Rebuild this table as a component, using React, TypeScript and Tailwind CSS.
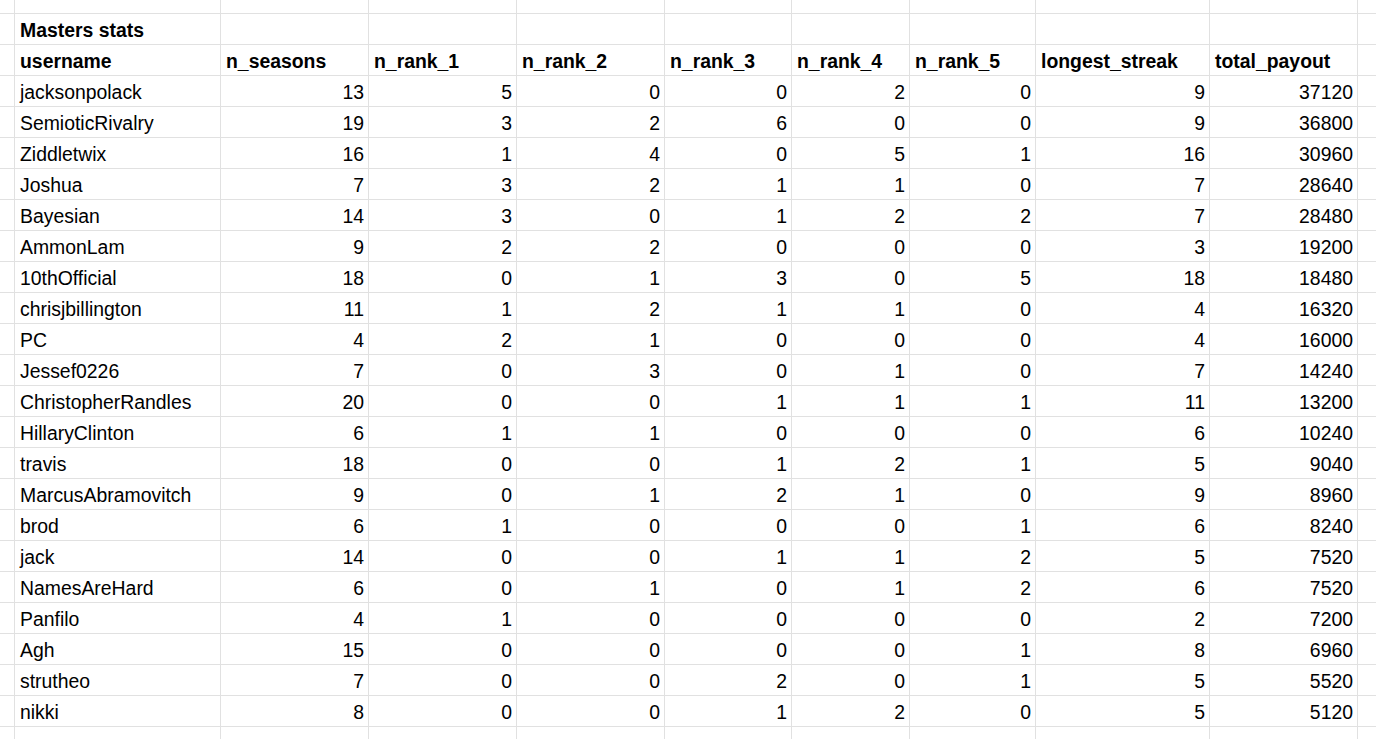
const header = [
  'username',
  'n_seasons',
  'n_rank_1',
  'n_rank_2',
  'n_rank_3',
  'n_rank_4',
  'n_rank_5',
  'longest_streak',
  'total_payout',
];

const rows: [string, ...number[]][] = [
  ['jacksonpolack', 13, 5, 0, 0, 2, 0, 9, 37120],
  ['SemioticRivalry', 19, 3, 2, 6, 0, 0, 9, 36800],
  ['Ziddletwix', 16, 1, 4, 0, 5, 1, 16, 30960],
  ['Joshua', 7, 3, 2, 1, 1, 0, 7, 28640],
  ['Bayesian', 14, 3, 0, 1, 2, 2, 7, 28480],
  ['AmmonLam', 9, 2, 2, 0, 0, 0, 3, 19200],
  ['10thOfficial', 18, 0, 1, 3, 0, 5, 18, 18480],
  ['chrisjbillington', 11, 1, 2, 1, 1, 0, 4, 16320],
  ['PC', 4, 2, 1, 0, 0, 0, 4, 16000],
  ['Jessef0226', 7, 0, 3, 0, 1, 0, 7, 14240],
  ['ChristopherRandles', 20, 0, 0, 1, 1, 1, 11, 13200],
  ['HillaryClinton', 6, 1, 1, 0, 0, 0, 6, 10240],
  ['travis', 18, 0, 0, 1, 2, 1, 5, 9040],
  ['MarcusAbramovitch', 9, 0, 1, 2, 1, 0, 9, 8960],
  ['brod', 6, 1, 0, 0, 0, 1, 6, 8240],
  ['jack', 14, 0, 0, 1, 1, 2, 5, 7520],
  ['NamesAreHard', 6, 0, 1, 0, 1, 2, 6, 7520],
  ['Panfilo', 4, 1, 0, 0, 0, 0, 2, 7200],
  ['Agh', 15, 0, 0, 0, 0, 1, 8, 6960],
  ['strutheo', 7, 0, 0, 2, 0, 1, 5, 5520],
  ['nikki', 8, 0, 0, 1, 2, 0, 5, 5120],
];

// 9 data columns + a partial one on each side
const COLS = 11;

function Cell({ children, right, bold }: { children?: React.ReactNode; right?: boolean; bold?: boolean }) {
  return (
    <div
      className={`bg-white flex items-end overflow-hidden whitespace-nowrap pb-[3px] leading-[22px] ${
        right ? 'justify-end pr-[4px]' : 'pl-[5px]'
      } ${bold ? 'font-bold' : ''}`}
    >
      {children}
    </div>
  );
}

function Blank() {
  return <div className="bg-white" />;
}

export default function App() {
  return (
    <div className="w-[1376px] h-[739px] overflow-hidden bg-white font-['Liberation_Sans',Arial,sans-serif] text-[19.4px] text-black">
      <div className="grid h-[760px] gap-px bg-[#e1e1e1] grid-cols-[14px_205px_147px_147px_147px_126px_117px_125px_173px_147px_1fr] grid-rows-[13px_repeat(23,30px)_30px]">
        {/* partial row above */}
        {Array.from({ length: COLS }).map((_, i) => (
          <Blank key={`top-${i}`} />
        ))}

        {/* title row */}
        <Blank />
        <Cell bold>Masters stats</Cell>
        {Array.from({ length: COLS - 2 }).map((_, i) => (
          <Blank key={`title-${i}`} />
        ))}

        {/* header row */}
        <Blank />
        {header.map((h) => (
          <Cell key={h} bold>
            {h}
          </Cell>
        ))}
        <Blank />

        {/* data rows */}
        {rows.map(([name, ...nums]) => (
          <div key={name} className="contents">
            <Blank />
            <Cell>{name}</Cell>
            {nums.map((n, i) => (
              <Cell key={i} right>
                {n}
              </Cell>
            ))}
            <Blank />
          </div>
        ))}

        {/* partial row below */}
        {Array.from({ length: COLS }).map((_, i) => (
          <Blank key={`bottom-${i}`} />
        ))}
      </div>
    </div>
  );
}
